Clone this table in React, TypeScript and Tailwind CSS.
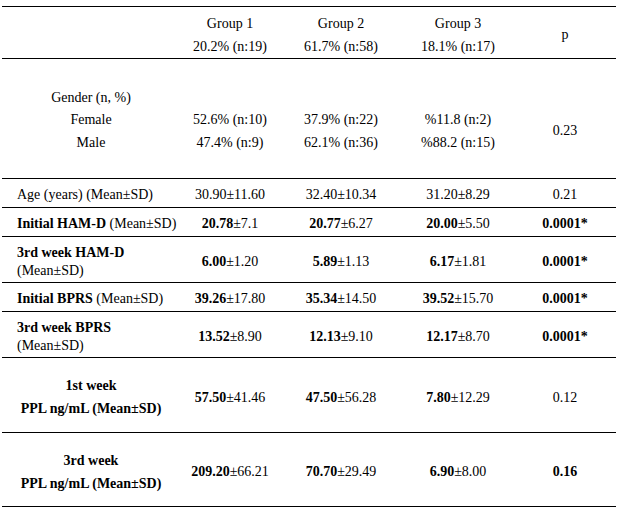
import React from "react";

type Cell = React.ReactNode;

function Val({ b, r }: { b: string; r: string }) {
  return (
    <span>
      <span className="font-bold">{b}</span>
      {r}
    </span>
  );
}

function Row({
  h,
  cells,
  leftAlign,
  lh,
}: {
  h: string;
  cells: Cell[];
  leftAlign?: boolean;
  lh?: string;
}) {
  const widths = ["w-[178px]", "w-[100px]", "w-[122px]", "w-[112px]", "w-[102px]"];
  return (
    <div className={`flex border-t border-black ${h}`}>
      {cells.map((c, i) => (
        <div
          key={i}
          className={`${widths[i]} shrink-0 flex flex-col justify-center pt-[4px] ${
            i === 0 && leftAlign ? "items-start pl-[15px] text-left" : "items-center text-center"
          } ${lh ?? "leading-[20px]"}`}
        >
          {c}
        </div>
      ))}
    </div>
  );
}

export default function App() {
  return (
    <div
      className="bg-white w-[622px] h-[513px] pt-[6px] pl-[2px] text-black text-[14px]"
      style={{ fontFamily: '"Liberation Serif", "Times New Roman", serif' }}
    >
      <div className="w-[614px] border-b border-black">
        <Row
          h="h-[52px]"
          lh="leading-[23px]"
          cells={[
            "",
            <>
              <div>Group 1</div>
              <div>20.2% (n:19)</div>
            </>,
            <>
              <div>Group 2</div>
              <div>61.7% (n:58)</div>
            </>,
            <>
              <div>Group 3</div>
              <div>18.1% (n:17)</div>
            </>,
            "p",
          ]}
        />
        <Row
          h="h-[120px]"
          lh="leading-[22.5px]"
          cells={[
            <>
              <div>Gender (n, %)</div>
              <div>Female</div>
              <div>Male</div>
            </>,
            <>
              <div>&nbsp;</div>
              <div>52.6% (n:10)</div>
              <div>47.4% (n:9)</div>
            </>,
            <>
              <div>&nbsp;</div>
              <div>37.9% (n:22)</div>
              <div>62.1% (n:36)</div>
            </>,
            <>
              <div>&nbsp;</div>
              <div>%11.8 (n:2)</div>
              <div>%88.2 (n:15)</div>
            </>,
            <div className="pt-[22px]">0.23</div>,
          ]}
        />
        <Row
          h="h-[29px]"
          leftAlign
          cells={[
            "Age (years) (Mean±SD)",
            "30.90±11.60",
            "32.40±10.34",
            "31.20±8.29",
            "0.21",
          ]}
        />
        <Row
          h="h-[29px]"
          leftAlign
          cells={[
            <span>
              <span className="font-bold">Initial HAM-D</span> (Mean±SD)
            </span>,
            <Val b="20.78" r="±7.1" />,
            <Val b="20.77" r="±6.27" />,
            <Val b="20.00" r="±5.50" />,
            <span className="font-bold">0.0001*</span>,
          ]}
        />
        <Row
          h="h-[46px]"
          leftAlign
          lh="leading-[18px]"
          cells={[
            <>
              <div className="font-bold">3rd week HAM-D</div>
              <div>(Mean±SD)</div>
            </>,
            <Val b="6.00" r="±1.20" />,
            <Val b="5.89" r="±1.13" />,
            <Val b="6.17" r="±1.81" />,
            <span className="font-bold">0.0001*</span>,
          ]}
        />
        <Row
          h="h-[29px]"
          leftAlign
          cells={[
            <span>
              <span className="font-bold">Initial BPRS</span> (Mean±SD)
            </span>,
            <Val b="39.26" r="±17.80" />,
            <Val b="35.34" r="±14.50" />,
            <Val b="39.52" r="±15.70" />,
            <span className="font-bold">0.0001*</span>,
          ]}
        />
        <Row
          h="h-[46px]"
          leftAlign
          lh="leading-[18px]"
          cells={[
            <>
              <div className="font-bold">3rd week BPRS</div>
              <div>(Mean±SD)</div>
            </>,
            <Val b="13.52" r="±8.90" />,
            <Val b="12.13" r="±9.10" />,
            <Val b="12.17" r="±8.70" />,
            <span className="font-bold">0.0001*</span>,
          ]}
        />
        <Row
          h="h-[75px]"
          lh="leading-[23px]"
          cells={[
            <div className="font-bold">
              <div>1st week</div>
              <div>PPL ng/mL (Mean±SD)</div>
            </div>,
            <Val b="57.50" r="±41.46" />,
            <Val b="47.50" r="±56.28" />,
            <Val b="7.80" r="±12.29" />,
            "0.12",
          ]}
        />
        <Row
          h="h-[74px]"
          lh="leading-[23px]"
          cells={[
            <div className="font-bold">
              <div>3rd week</div>
              <div>PPL ng/mL (Mean±SD)</div>
            </div>,
            <Val b="209.20" r="±66.21" />,
            <Val b="70.70" r="±29.49" />,
            <Val b="6.90" r="±8.00" />,
            <span className="font-bold">0.16</span>,
          ]}
        />
      </div>
    </div>
  );
}
